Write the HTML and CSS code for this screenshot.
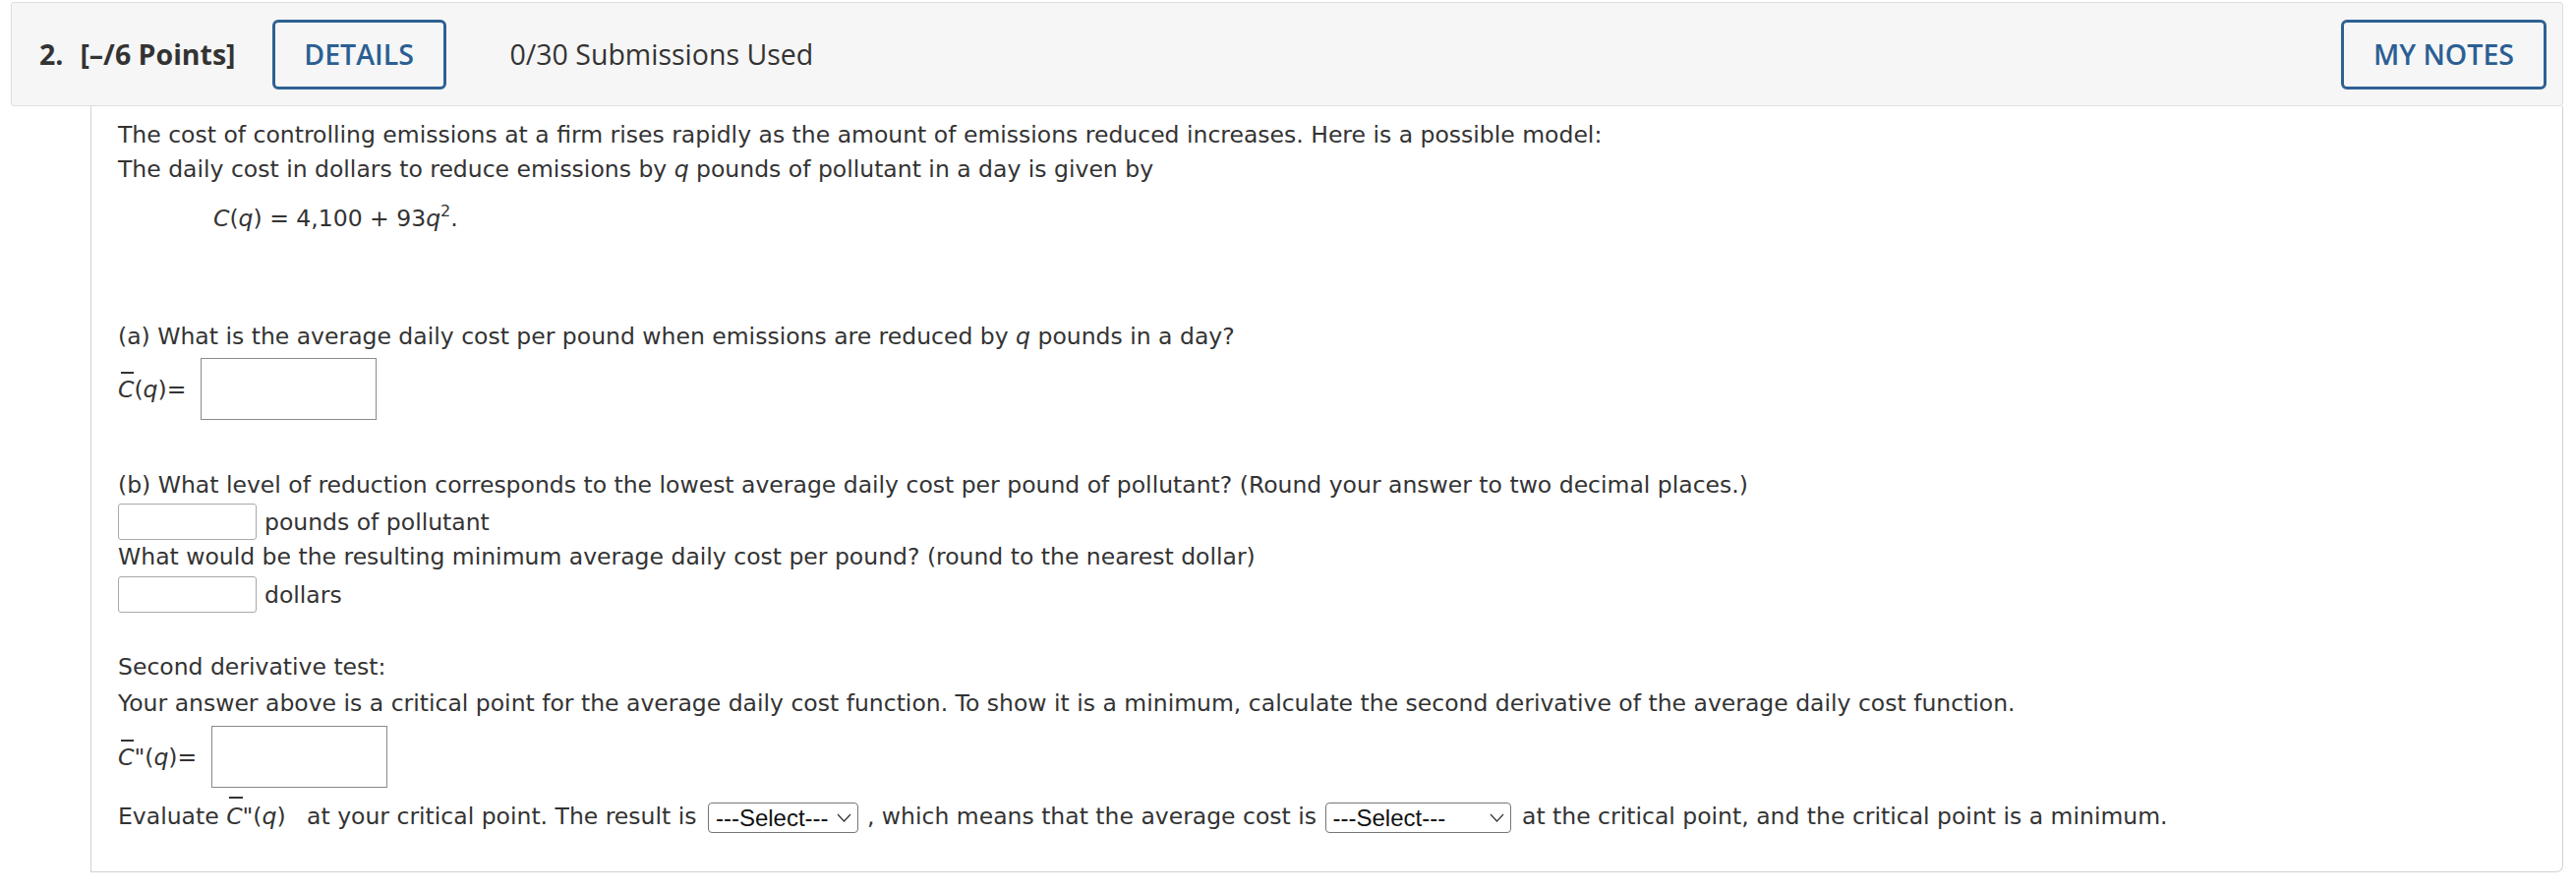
FILE: index.html
```html
<!DOCTYPE html>
<html lang="en">
<head>
<meta charset="utf-8">
<title>Question 2</title>
<link rel="stylesheet" href="styles.css">
</head>
<body>
<div class="page">
  <div class="qhead">
    <span class="qnum">2.</span>
    <span class="qpts">[–/6 Points]</span>
    <button class="btn btn-details" type="button">DETAILS</button>
    <span class="subs">0/30 Submissions Used</span>
    <button class="btn btn-notes" type="button">MY NOTES</button>
  </div>
  <div class="qbody">
    <p class="line">The cost of controlling emissions at a firm rises rapidly as the amount of emissions reduced increases. Here is a possible model:</p>
    <p class="line">The daily cost in dollars to reduce emissions by <i>q</i> pounds of pollutant in a day is given by</p>
    <p class="line formula"><i>C</i>(<i>q</i>) = 4,100 + 93<i>q</i><sup>2</sup>.</p>

    <p class="line part-a">(a) What is the average daily cost per pound when emissions are reduced by <i>q</i> pounds in a day?</p>
    <div class="answer-row">
      <span class="math"><i class="bar">C</i>(<i>q</i>)=</span>
      <input class="box-input" type="text" aria-label="average cost">
    </div>

    <p class="line part-b">(b) What level of reduction corresponds to the lowest average daily cost per pound of pollutant? (Round your answer to two decimal places.)</p>
    <div class="answer-row small-row">
      <input class="small-input" type="text" aria-label="pounds">
      <span>pounds of pollutant</span>
    </div>
    <p class="line">What would be the resulting minimum average daily cost per pound? (round to the nearest dollar)</p>
    <div class="answer-row small-row row-dollars">
      <input class="small-input" type="text" aria-label="dollars">
      <span>dollars</span>
    </div>

    <p class="line second">Second derivative test:</p>
    <p class="line your-answer">Your answer above is a critical point for the average daily cost function. To show it is a minimum, calculate the second derivative of the average daily cost function.</p>
    <div class="answer-row row-second">
      <span class="math"><i class="bar">C</i>"(<i>q</i>)=</span>
      <input class="box-input" type="text" aria-label="second derivative">
    </div>

    <p class="line evaluate">Evaluate <span class="math inline-math"><i class="bar">C</i>"(<i>q</i>)</span> at your critical point. The result is <select class="sel sel-1" aria-label="result"><option>---Select---</option><option>positive</option><option>negative</option><option>zero</option></select>, which means that the average cost is <select class="sel sel-2" aria-label="shape"><option>---Select---</option><option>concave up</option><option>concave down</option></select> at the critical point, and the critical point is a minimum.</p>
  </div>
</div>
</body>
</html>
```

FILE: styles.css
```css
* { box-sizing: border-box; }

html, body {
  margin: 0;
  padding: 0;
  background: #ffffff;
}

.page {
  padding: 2px 13px 0 11px;
}

/* ---------- header bar ---------- */
.qhead {
  display: flex;
  align-items: center;
  height: 106px;
  padding: 0 16px 0 28px;
  background: #f6f6f6;
  border: 1px solid #dedede;
  border-radius: 3px;
  font-family: "Open Sans", "Liberation Sans", sans-serif;
  color: #333333;
  font-size: 28.5px;
}

.qnum {
  font-weight: 700;
  margin-right: 17px;
}

.qpts {
  font-weight: 700;
}

.btn {
  font-family: "Open Sans", "Liberation Sans", sans-serif;
  font-size: 28.5px;
  font-weight: 600;
  color: #2b5f93;
  background: transparent;
  border: 3px solid #2e6193;
  border-radius: 6px;
  height: 71px;
  padding: 0;
  cursor: pointer;
}

.btn-details {
  width: 177px;
  margin-left: 37px;
}

.subs {
  margin-left: 65px;
  color: #333333;
}

.btn-notes {
  width: 209px;
  margin-left: auto;
}

/* ---------- question body ---------- */
.qbody {
  margin-left: 81px;
  border: 1px solid #d2d2d2;
  border-top: none;
  border-radius: 0 0 7px 0;
  padding: 12px 20px 38px 27px;
  font-family: "DejaVu Sans", Verdana, sans-serif;
  font-size: 23.5px;
  color: #333333;
}

.line {
  margin: 0;
  line-height: 35px;
}

.formula {
  margin-top: 15px;
  margin-left: 97px;
}

.formula sup {
  font-size: 16px;
  line-height: 0;
  vertical-align: 10px;
}

.part-a {
  margin-top: 85px;
}

.answer-row {
  display: flex;
  align-items: center;
  margin-top: 4px;
}

.math {
  display: inline-block;
}

.bar {
  position: relative;
  display: inline-block;
  line-height: 1;
}

.bar::before {
  content: "";
  position: absolute;
  left: 3px;
  right: 0;
  top: -7px;
  height: 2px;
  background: #333333;
}

.box-input {
  width: 179px;
  height: 63px;
  margin-left: 15px;
  border: 1px solid #8a8a8a;
  border-radius: 0;
  background: #ffffff;
  font: inherit;
}

.part-b {
  margin-top: 49px;
}

.small-row {
  margin-top: 1px;
  gap: 8px;
}

.row-dollars {
  margin-top: 2px;
}

.small-input {
  width: 141px;
  height: 37px;
  border: 1px solid #a9a9a9;
  border-radius: 3px;
  background: #ffffff;
  font: inherit;
}

.second {
  margin-top: 38px;
}

.your-answer {
  margin-top: 2px;
}

.row-second {
  margin-top: 5px;
}

.evaluate {
  margin-top: 12px;
}

.inline-math {
  margin: 0 14px 0 0;
}

.inline-math .bar::before {
  top: -9px;
}

.sel {
  -webkit-appearance: none;
  appearance: none;
  height: 31px;
  margin: 0 4px;
  padding: 0 0 0 7px;
  border: 1px solid #767676;
  border-radius: 4px;
  background-color: #ffffff;
  background-image: url("data:image/svg+xml,%3Csvg xmlns='http://www.w3.org/2000/svg' width='15' height='9' viewBox='0 0 15 9'%3E%3Cpath d='M1 1 L7.5 8 L14 1' fill='none' stroke='%23333' stroke-width='1.2'/%3E%3C/svg%3E");
  background-repeat: no-repeat;
  background-position: right 6px center;
  font-family: "Liberation Sans", Arial, sans-serif;
  font-size: 24px;
  color: #111111;
  vertical-align: middle;
}

.sel-1 {
  width: 153px;
  margin-right: 9px;
}

.sel-2 {
  width: 189px;
  margin-left: 1px;
}
```
